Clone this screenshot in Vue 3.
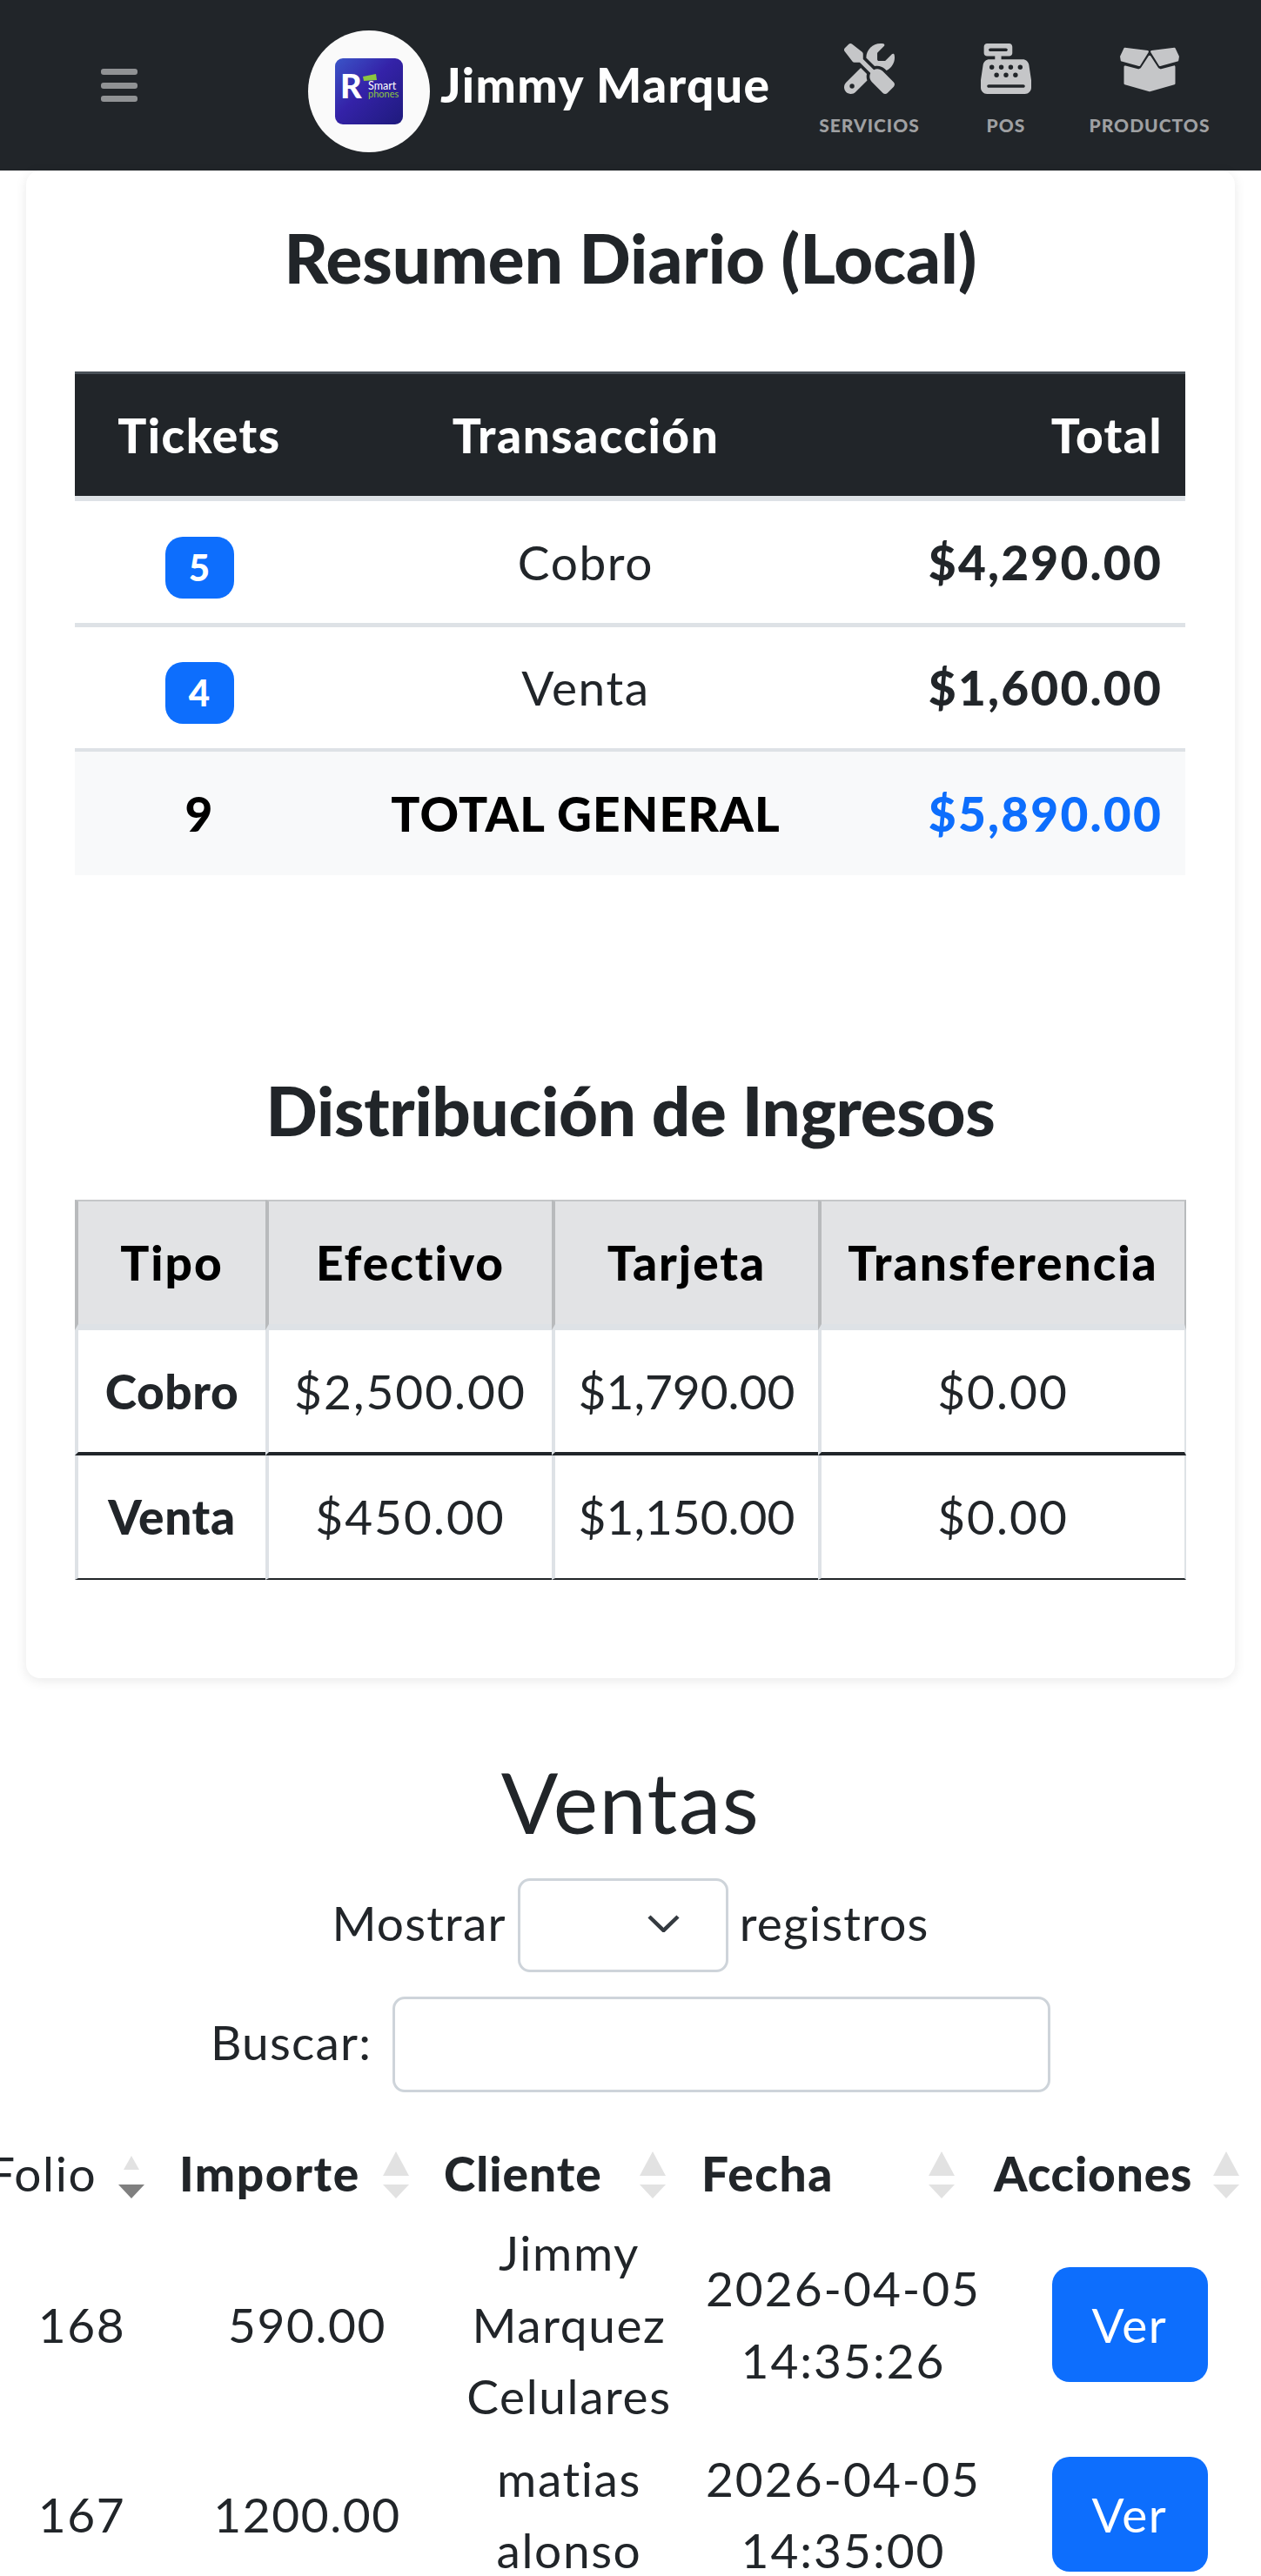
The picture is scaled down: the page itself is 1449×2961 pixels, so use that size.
<template>
  <div class="page">
    <nav class="navbar">
      <div class="burger"><span></span><span></span><span></span></div>
      <div class="brand">
        <div class="brand-circle">
          <svg class="logo" viewBox="0 0 78 76">
            <defs>
              <linearGradient id="logoBg" x1="0" y1="0" x2="1" y2="1">
                <stop offset="0" stop-color="#3b55c8" />
                <stop offset="0.45" stop-color="#3422a8" />
                <stop offset="1" stop-color="#1e1a7c" />
              </linearGradient>
            </defs>
            <rect width="78" height="76" rx="9" fill="url(#logoBg)" />
            <polygon points="32,21 47,18 48,25 33,26" fill="#8cc63f" />
            <text x="6" y="46" class="logo-r">R</text>
            <text x="38" y="36" class="logo-smart">Smart</text>
            <text x="38" y="45" class="logo-phones">phones</text>
          </svg>
        </div>
        <span class="brand-name">Jimmy Marque</span>
      </div>
      <div class="nav-links">
        <a class="nav-link link-1">
          <svg class="nav-icon" viewBox="0 0 512 512"><path d="M78.6 5C69.1-2.4 55.6-1.5 47 7L7 47c-8.5 8.5-9.4 22-2.1 31.6l80 104c4.5 5.9 11.6 9.4 19 9.4h54.1l109 109c-14.7 29-10 65.4 14.3 89.6l112 112c12.5 12.5 32.8 12.5 45.3 0l64-64c12.5-12.5 12.5-32.8 0-45.3l-112-112c-24.2-24.2-60.6-29-89.6-14.3l-109-109V104c0-7.5-3.5-14.5-9.4-19L78.6 5zM19.9 396.1C7.2 408.8 0 426.1 0 444.1C0 481.6 30.4 512 67.9 512c18 0 35.3-7.2 48-19.9L233.7 374.3c-7.8-20.9-9-43.6-3.6-65.1l-61.7-61.7L19.9 396.1zM512 144c0-10.5-1.1-20.7-3.2-30.5c-2.4-11.2-16.1-14.1-24.2-6l-63.9 63.9c-3 3-7.1 4.7-11.3 4.7H352c-8.8 0-16-7.2-16-16V102.6c0-4.2 1.7-8.3 4.7-11.3l63.9-63.9c8.1-8.1 5.2-21.8-6-24.2C388.7 1.1 378.5 0 368 0C288.5 0 224 64.5 224 144l0 .8 85.3 85.3c36-9.1 75.8 .5 104 28.7L429 274.5c49-23 83-72.8 83-130.5zM56 432a24 24 0 1 1 48 0 24 24 0 1 1 -48 0z" /></svg>
          <span>SERVICIOS</span>
        </a>
        <a class="nav-link link-2">
          <svg class="nav-icon" viewBox="0 0 512 512"><path d="M64 0C46.3 0 32 14.3 32 32V96c0 17.7 14.3 32 32 32h80v32H87c-31.6 0-58.5 23.1-63.3 54.4L1.1 364.1C.4 368.8 0 373.6 0 378.4V448c0 35.3 28.7 64 64 64H448c35.3 0 64-28.7 64-64V378.4c0-4.8-.4-9.6-1.1-14.4L488.2 214.4C483.5 183.1 456.6 160 425 160H208V128h80c17.7 0 32-14.3 32-32V32c0-17.7-14.3-32-32-32H64zM96 48H256c8.8 0 16 7.2 16 16s-7.2 16-16 16H96c-8.8 0-16-7.2-16-16s7.2-16 16-16zM64 432c0-8.8 7.2-16 16-16H432c8.8 0 16 7.2 16 16s-7.2 16-16 16H80c-8.8 0-16-7.2-16-16zm48-168a24 24 0 1 1 0-48 24 24 0 1 1 0 48zm120-24a24 24 0 1 1 -48 0 24 24 0 1 1 48 0zM160 344a24 24 0 1 1 0-48 24 24 0 1 1 0 48zM328 240a24 24 0 1 1 -48 0 24 24 0 1 1 48 0zM256 344a24 24 0 1 1 0-48 24 24 0 1 1 0 48zM424 240a24 24 0 1 1 -48 0 24 24 0 1 1 48 0zM352 344a24 24 0 1 1 0-48 24 24 0 1 1 0 48z" /></svg>
          <span>POS</span>
        </a>
        <a class="nav-link link-3">
          <svg class="nav-icon box-icon" viewBox="50 30 210 165">
            <path d="M72 46 L148 55 L120 100 L62 84 L60 72 Z" />
            <path d="M238 46 L162 55 L190 100 L248 84 L250 72 Z" />
            <path d="M73 106 L118 118 L128 113 L155 72 L182 113 L192 118 L237 106 L237 162 L155 185 L73 162 Z" />
          </svg>
          <span>PRODUCTOS</span>
        </a>
      </div>
    </nav>

    <section class="card">
      <h2 class="card-title first">Resumen Diario (Local)</h2>
      <table class="resumen">
        <colgroup>
          <col style="width: 286px" />
          <col style="width: 602px" />
          <col style="width: 388px" />
        </colgroup>
        <thead>
          <tr>
            <th>Tickets</th>
            <th>Transacción</th>
            <th class="right">Total</th>
          </tr>
        </thead>
        <tbody>
          <tr v-for="r in resumen" :key="r.name">
            <td><span class="badge">{{ r.tickets }}</span></td>
            <td>{{ r.name }}</td>
            <td class="right money">{{ r.total }}</td>
          </tr>
          <tr class="total-row">
            <td>9</td>
            <td>TOTAL GENERAL</td>
            <td class="right blue money">$5,890.00</td>
          </tr>
        </tbody>
      </table>

      <h2 class="card-title second">Distribución de Ingresos</h2>
      <table class="ingresos">
        <colgroup>
          <col style="width: 219px" />
          <col style="width: 329px" />
          <col style="width: 306px" />
          <col style="width: 423px" />
        </colgroup>
        <thead>
          <tr>
            <th>Tipo</th>
            <th>Efectivo</th>
            <th>Tarjeta</th>
            <th>Transferencia</th>
          </tr>
        </thead>
        <tbody>
          <tr v-for="r in ingresos" :key="r.tipo">
            <td class="strong">{{ r.tipo }}</td>
            <td>{{ r.efectivo }}</td>
            <td>{{ r.tarjeta }}</td>
            <td>{{ r.transferencia }}</td>
          </tr>
        </tbody>
      </table>
    </section>

    <section class="ventas">
      <h3 class="ventas-title">Ventas</h3>
      <div class="control-row show-row">
        <label>Mostrar</label>
        <div class="select-wrap">
          <select class="field select"><option></option></select>
          <svg class="chevron" viewBox="0 0 37 20"><path d="M2 2 L18.5 18 L35 2" /></svg>
        </div>
        <label>registros</label>
      </div>
      <div class="control-row search-row">
        <label>Buscar:</label>
        <input class="field search" type="text" />
      </div>
      <div class="table-clip">
        <table class="listado">
          <colgroup>
            <col style="width: 204px" />
            <col style="width: 310px" />
            <col style="width: 296px" />
            <col style="width: 346px" />
            <col style="width: 312px" />
          </colgroup>
          <thead>
            <tr>
              <th v-for="c in columnas" :key="c.label" :class="c.cls">
                {{ c.label }}
                <span class="sort">
                  <i class="up"></i>
                  <i class="down"></i>
                </span>
              </th>
            </tr>
          </thead>
          <tbody>
            <tr v-for="v in ventas" :key="v.folio">
              <td class="c-folio">{{ v.folio }}</td>
              <td class="c-importe">{{ v.importe }}</td>
              <td class="c-cliente">{{ v.cliente }}</td>
              <td class="c-fecha"><span>{{ v.fecha }}</span><span>{{ v.hora }}</span></td>
              <td><button class="btn-ver">Ver</button></td>
            </tr>
          </tbody>
        </table>
      </div>
    </section>
  </div>
</template>

<script setup>
const resumen = [
  { tickets: 5, name: 'Cobro', total: '$4,290.00' },
  { tickets: 4, name: 'Venta', total: '$1,600.00' },
];

const ingresos = [
  { tipo: 'Cobro', efectivo: '$2,500.00', tarjeta: '$1,790.00', transferencia: '$0.00' },
  { tipo: 'Venta', efectivo: '$450.00', tarjeta: '$1,150.00', transferencia: '$0.00' },
];

const columnas = [
  { label: 'Folio', cls: 'h-folio' },
  { label: 'Importe', cls: 'h-importe' },
  { label: 'Cliente', cls: 'h-cliente' },
  { label: 'Fecha', cls: 'h-fecha' },
  { label: 'Acciones', cls: 'h-acciones' },
];

const ventas = [
  { folio: 168, importe: '590.00', cliente: 'Jimmy Marquez Celulares', fecha: '2026-04-05', hora: '14:35:26' },
  { folio: 167, importe: '1200.00', cliente: 'matias alonso', fecha: '2026-04-05', hora: '14:35:00' },
];
</script>

<style>
html,
body {
  margin: 0;
  overflow: hidden;
  background: #fff;
}
</style>

<style scoped>
.page {
  height: 2961px;
  overflow: hidden;
  background: #fff;
  color: #212529;
  font-family: Lato, "Liberation Sans", sans-serif;
  font-size: 55px;
  line-height: 1.5;
  letter-spacing: 1.6px;
}

/* barra superior */
.navbar {
  display: flex;
  height: 196px;
  background: #212529;
  padding-left: 116px;
  padding-right: 42px;
  box-sizing: border-box;
}
.burger {
  width: 42px;
  margin-top: 79px;
  height: 38px;
  display: flex;
  flex-direction: column;
  justify-content: space-between;
}
.burger span {
  height: 7px;
  border-radius: 3px;
  background: #909294;
}
.brand {
  display: flex;
  align-items: center;
  margin-left: 196px;
  gap: 12px;
}
.brand-circle {
  width: 140px;
  height: 140px;
  margin-top: 14px;
  border-radius: 50%;
  background: #fafafa;
  display: flex;
  align-items: center;
  justify-content: center;
}
.logo {
  width: 78px;
  height: 76px;
}
.logo-r {
  font-size: 38px;
  font-weight: 900;
  letter-spacing: 0;
  fill: #fff;
}
.logo-smart {
  font-size: 12.5px;
  letter-spacing: 0;
  fill: #fff;
}
.logo-phones {
  font-size: 11px;
  letter-spacing: 0;
  fill: #8cc63f;
}
.brand-name {
  color: #fff;
  font-weight: 900;
  font-size: 55px;
  letter-spacing: 1.4px;
  white-space: nowrap;
  margin-bottom: 2px;
}
.nav-links {
  display: flex;
  margin-left: auto;
  padding-top: 50px;
}
.nav-link {
  display: flex;
  flex-direction: column;
  align-items: center;
  color: #9fa0a2;
  font-size: 21px;
  font-weight: 900;
  letter-spacing: 1px;
  line-height: 28px;
}
.link-1 { width: 156px; }
.link-2 { width: 158px; }
.link-3 { width: 172px; }
.nav-icon {
  height: 58px;
  width: 58px;
  fill: #c5c6c8;
  margin-bottom: 22px;
}
.box-icon {
  width: 72px;
}
.box-icon path {
  stroke: #c5c6c8;
  stroke-width: 8;
  stroke-linejoin: round;
}

/* tarjeta de resumen */
.card {
  margin: 0 30px;
  height: 1733px;
  box-sizing: border-box;
  padding: 0 56px;
  background: #fff;
  border-radius: 16px;
  box-shadow: 0 3px 14px rgba(0, 0, 0, 0.09);
}
.card-title {
  margin: 0;
  text-align: center;
  font-size: 78px;
  font-weight: 900;
  letter-spacing: 0;
  line-height: 100px;
}
.card-title.first {
  padding-top: 50px;
  margin-bottom: 81px;
}
.card-title.second {
  margin-top: 220px;
  margin-bottom: 53px;
  letter-spacing: -0.3px;
}
table {
  border-collapse: separate;
  border-spacing: 0;
  table-layout: fixed;
  text-align: center;
}
th,
td {
  padding: 0;
  box-sizing: border-box;
}
.right {
  text-align: right;
  padding-right: 26px;
}
.strong {
  font-weight: 900;
  letter-spacing: 0.6px;
}
.blue {
  color: #0d6efd;
}
.resumen {
  width: 1276px;
}
.resumen th {
  height: 149px;
  background: #212529;
  color: #fff;
  font-weight: 900;
  letter-spacing: 1.5px;
  border-top: 3px solid #495057;
  border-bottom: 6px solid #dee2e6;
}
.resumen td {
  height: 145px;
  border-bottom: 5px solid #dee2e6;
}
.resumen tbody tr:nth-child(2) td {
  height: 143px;
  border-bottom-width: 4px;
}
.resumen td.money {
  font-weight: 900;
  letter-spacing: 2.2px;
}
.resumen .total-row td {
  height: 142px;
  background: #f8f9fa;
  border-bottom: 0;
  color: #000;
  font-weight: 900;
  letter-spacing: 1.2px;
}
.resumen .total-row td.blue {
  color: #0d6efd;
  letter-spacing: 2.2px;
}
.badge {
  display: inline-block;
  width: 79px;
  height: 71px;
  line-height: 71px;
  border-radius: 20px;
  background: #0d6efd;
  color: #fff;
  font-size: 42px;
  font-weight: 900;
  letter-spacing: 0;
  vertical-align: middle;
}
.ingresos {
  width: 1277px;
}
.ingresos th {
  height: 150px;
  background: #e2e3e5;
  color: #000;
  font-weight: 900;
  letter-spacing: 2px;
  border-top: 2px solid #c4c6c8;
  border-left: 4px solid #b8babc;
  border-bottom: 7px solid #dee2e6;
}
.ingresos th:last-child {
  border-right: 2px solid #b8babc;
}
.ingresos td {
  height: 144px;
  letter-spacing: 2px;
  border-left: 4px solid #dee2e6;
  border-bottom: 4px solid #212529;
}
.ingresos td.strong {
  letter-spacing: 0.6px;
}
.ingresos td:nth-child(3) {
  letter-spacing: 0;
}
.ingresos td:last-child {
  border-right: 2px solid #dee2e6;
}
.ingresos tr:last-child td {
  height: 143px;
  border-bottom-width: 2px;
}

/* listado de ventas */
.ventas {
  text-align: center;
}
.ventas-title {
  margin: 84px 0 30px;
  font-size: 97px;
  font-weight: 400;
  line-height: 116px;
}
.control-row {
  display: flex;
  align-items: center;
  justify-content: center;
}
.control-row label {
  margin-bottom: 6px;
  letter-spacing: 1.2px;
}
.show-row {
  gap: 13px;
  margin-bottom: 28px;
}
.search-row {
  gap: 24px;
}
.field {
  display: block;
  box-sizing: border-box;
  height: 108px;
  border: 3px solid #ced4da;
  border-radius: 14px;
  background: #fff;
  appearance: none;
  outline: none;
  padding: 0;
}
.select-wrap {
  position: relative;
}
.select {
  width: 242px;
}
.chevron {
  position: absolute;
  left: 149px;
  top: 42px;
  width: 37px;
  height: 20px;
  fill: none;
  stroke: #343a40;
  stroke-width: 4.5;
}
.search {
  width: 756px;
  height: 110px;
}
.table-clip {
  overflow: hidden;
  margin-top: 47px;
}
.listado {
  width: 1468px;
  margin-left: -14px;
}
.listado th {
  position: relative;
  height: 92px;
  text-align: left;
  font-weight: 900;
  letter-spacing: 1.6px;
  padding-right: 30px;
}
.listado td {
  padding-top: 4px;
  padding-bottom: 8px;
}
.listado tr:last-child td {
  padding-bottom: 4px;
}
.listado .h-folio {
  font-weight: 400;
}
.h-folio { padding-left: 0; }
.h-importe { padding-left: 16px; }
.listado .h-cliente { padding-left: 10px; letter-spacing: 1px; }
.h-fecha { padding-left: 10px; }
.listado .h-acciones { padding-left: 0; letter-spacing: 0.8px; }
.listado .c-folio { padding-left: 12px; }
.listado .c-importe { padding-left: 16px; }
.listado .c-cliente { padding-left: 12px; }
.c-fecha {
  letter-spacing: 2px;
}
.c-fecha span {
  display: block;
  white-space: nowrap;
}
.sort {
  position: absolute;
  top: 21px;
  right: 30px;
  width: 30px;
  height: 54px;
}
.h-folio .sort { right: 24px; }
.h-fecha .sort { right: 45px; }
.h-cliente .sort { right: 31px; }
.sort i {
  position: absolute;
  left: 0;
  width: 0;
  height: 0;
  border-left: 15px solid transparent;
  border-right: 15px solid transparent;
}
.sort .up {
  top: 0;
  border-bottom: 28px solid #e2e2e2;
}
.sort .down {
  top: 38px;
  border-top: 16px solid #e2e2e2;
}
.h-folio .sort .up {
  left: 6px;
  top: 5px;
  border-left-width: 9px;
  border-right-width: 9px;
  border-bottom-width: 16px;
}
.h-folio .sort .down {
  border-top-color: #808080;
}
.btn-ver {
  display: block;
  margin: 0 auto;
  width: 179px;
  height: 132px;
  border: 0;
  border-radius: 20px;
  background: #0d6efd;
  color: #fff;
  font: inherit;
  letter-spacing: inherit;
}
</style>
